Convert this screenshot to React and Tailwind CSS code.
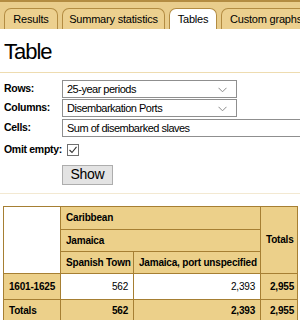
import React from "react";

const tabs = [
  { label: "Results", w: "w-[54px]" },
  { label: "Summary statistics", w: "w-[103px]" },
  { label: "Tables", w: "w-[48px]", active: true },
  { label: "Custom graphs", w: "w-[90px]" },
];

const Chevron = () => (
  <svg width="9" height="6" viewBox="0 0 9 6" className="absolute right-[9px] top-[6px]">
    <path d="M0.5 0.8 L4.5 4.8 L8.5 0.8" fill="none" stroke="#8a8a8a" strokeWidth="1" />
  </svg>
);

const th = "bg-[#ecd08a] border border-[#a67f33] px-[5px] text-left";

const App = () => {
  return (
    <div className="w-[300px] h-[320px] overflow-hidden bg-white text-black" style={{ fontFamily: '"Liberation Sans", Arial, sans-serif' }}>
      {/* Tabs */}
      <div className="h-[29px] bg-[#e9cd8c] border-t-2 border-[#b38c42] flex items-end pl-[4px] gap-[4px] overflow-hidden whitespace-nowrap">
        {tabs.map((t) => (
          <div
            key={t.label}
            className={
              "h-[21px] flex items-center justify-center text-[11px] tracking-[-0.2px] rounded-t-[7px] border border-b-0 border-[#b38c42] shrink-0 " +
              t.w + " " +
              (t.active ? "bg-white" : "bg-[#ecd08f]")
            }
          >
            {t.label}
          </div>
        ))}
      </div>

      <h1 className="text-[22px] tracking-[-1px] leading-none pl-[4px] pt-[12px] h-[43px]">Table</h1>
      <div className="h-px bg-[#eedcb0]" />

      {/* Form */}
      <div className="pt-[6px] pl-[4px] text-[10.5px] tracking-[-0.3px]">
        <div className="flex items-center h-[19.5px]">
          <span className="w-[58px] font-bold">Rows:</span>
          <div className="relative w-[175px] h-[18px] border border-[#8f8f8f] bg-white flex items-center pl-[4px]">
            <span className="text-[11px] tracking-[-0.5px]">25-year periods</span>
            <Chevron />
          </div>
        </div>
        <div className="flex items-center h-[19.5px]">
          <span className="w-[58px] font-bold">Columns:</span>
          <div className="relative w-[175px] h-[18px] border border-[#8f8f8f] bg-white flex items-center pl-[4px]">
            <span className="text-[11px] tracking-[-0.5px]">Disembarkation Ports</span>
            <Chevron />
          </div>
        </div>
        <div className="flex items-center h-[19.5px]">
          <span className="w-[58px] font-bold">Cells:</span>
          <div className="flex-1 h-[18px] border border-[#8f8f8f] border-r-0 bg-white flex items-center pl-[4px]">
            <span className="text-[11px] tracking-[-0.5px]">Sum of disembarked slaves</span>
          </div>
        </div>
        <div className="flex items-center h-[24px] whitespace-nowrap">
          <span className="w-[63px] font-bold">Omit empty:</span>
          <svg width="12" height="12" viewBox="0 0 12 12">
            <rect x="0.5" y="0.5" width="11" height="11" fill="white" stroke="#6f6f6f" />
            <path d="M2.5 6 L5 8.5 L9.5 2.8" fill="none" stroke="#333" strokeWidth="1.1" />
          </svg>
        </div>
        <div className="pl-[58px] pt-[3px]">
          <div className="w-[51px] h-[20px] bg-[#e3e3e3] border border-[#adadad] flex items-center justify-center text-[14px] tracking-[-0.3px]">Show</div>
        </div>
      </div>
      <div className="h-px bg-[#f3e9d2] mt-[8px]" />

      {/* Result table */}
      <table className="table-fixed w-[294px] mt-[12px] ml-[3px] border-collapse text-[10px] tracking-[-0.2px] font-bold whitespace-nowrap">
        <colgroup>
          <col className="w-[57px]" />
          <col className="w-[73px]" />
          <col className="w-[127px]" />
          <col className="w-[37px]" />
        </colgroup>
        <tbody>
          <tr className="h-[23px]">
            <td rowSpan={3} className="bg-white border border-[#a67f33]" />
            <td colSpan={2} className={th}>Caribbean</td>
            <td rowSpan={3} className="bg-[#ecd08a] border border-[#a67f33] pl-[5px] pr-0">Totals</td>
          </tr>
          <tr className="h-[22px]">
            <td colSpan={2} className={th}>Jamaica</td>
          </tr>
          <tr className="h-[22px]">
            <td className={th}>Spanish Town</td>
            <td className={th}>Jamaica, port unspecified</td>
          </tr>
          <tr className="h-[26px]">
            <td className={th}>1601-1625</td>
            <td className="bg-white border border-[#a67f33] px-[5px] text-right font-normal">562</td>
            <td className="bg-white border border-[#a67f33] px-[5px] text-right font-normal">2,393</td>
            <td className="bg-[#ecd08a] border border-[#a67f33] px-[3px] text-right">2,955</td>
          </tr>
          <tr className="h-[23px]">
            <td className={th}>Totals</td>
            <td className="bg-[#ecd08a] border border-[#a67f33] px-[5px] text-right">562</td>
            <td className="bg-[#ecd08a] border border-[#a67f33] px-[5px] text-right">2,393</td>
            <td className="bg-[#ecd08a] border border-[#a67f33] px-[3px] text-right">2,955</td>
          </tr>
        </tbody>
      </table>
    </div>
  );
};

export default App;
